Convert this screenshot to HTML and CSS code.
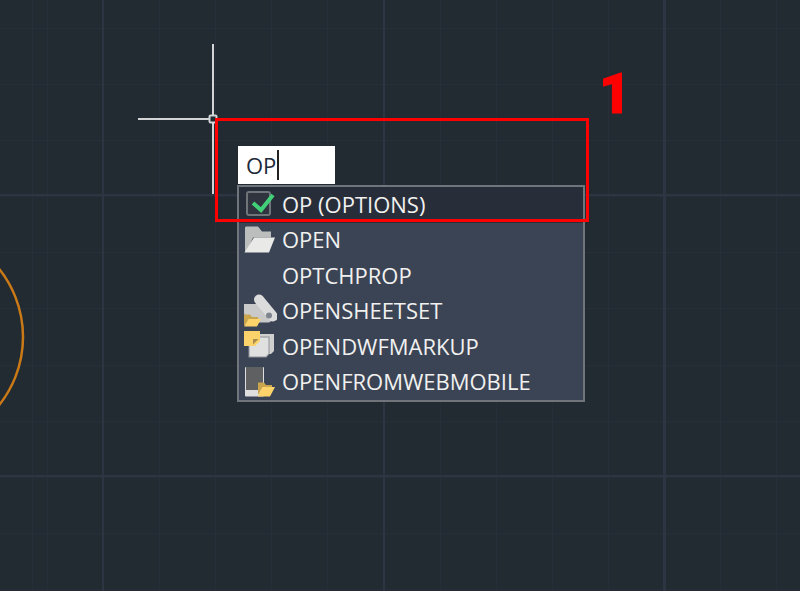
FILE: index.html
```html
<!DOCTYPE html>
<html lang="en">
<head>
    <meta charset="UTF-8">
    <meta name="viewport" content="width=device-width, initial-scale=1.0">
    <title>Command line</title>
    <link rel="stylesheet" href="styles.css">
</head>
<body>
    <div class="drawing">
        <svg class="cad-lines" width="800" height="591" viewBox="0 0 800 591">
            <circle class="arc" cx="-86" cy="337" r="109"/>
            <path class="cursor" d="M213 44V115M213 123V194M138 119H209"/>
            <rect class="cursor" x="209.500" y="115.500" width="7" height="7" rx="1"/>
        </svg>

        <div class="command">
            <div class="command-input">OP<span class="caret"></span></div>
            <ul class="suggestions">
                <li class="suggestion active">
                    <svg class="icon" viewBox="0 0 34 35">
                        <rect x="4" y="5" width="23" height="23" rx="2" fill="#2f343f" stroke="#6f747b" stroke-width="2"/>
                        <path d="M10 16L18 23L30 8" fill="none" stroke="#41cf78" stroke-width="4"/>
                    </svg>
                    <span class="label">OP (OPTIONS)</span>
                </li>
                <li class="suggestion">
                    <svg class="icon" viewBox="0 0 34 35">
                        <path d="M2 29V4.500L3 3.500H15L19 8.500H28V14.500H10L4 29Z" fill="#bcbdbd"/>
                        <path d="M1.500 29.500L11 14.500H32L26 29.500Z" fill="#e9e9e7"/>
                    </svg>
                    <span class="label">OPEN</span>
                </li>
                <li class="suggestion">
                    <span class="icon"></span>
                    <span class="label">OPTCHPROP</span>
                </li>
                <li class="suggestion">
                    <svg class="icon" viewBox="0 0 34 35">
                        <path d="M1 10H14L30 26L26 28.500H8L1 20Z" fill="#c9c9c9"/>
                        <path d="M16 5.500L30 22.500" fill="none" stroke="#dcdcdc" stroke-width="10" stroke-linecap="round"/>
                        <circle cx="26" cy="21.500" r="3" fill="#7f858f"/>
                        <path d="M1 31V20.500H7L9 23H15V25H6L2 31Z" fill="#c9a64e"/>
                        <path d="M1 32.500L5.500 25H18L14 32.500Z" fill="#fbd36a"/>
                    </svg>
                    <span class="label">OPENSHEETSET</span>
                </li>
                <li class="suggestion">
                    <svg class="icon" viewBox="0 0 34 35">
                        <path d="M14 5H31V22L28 25H14Z" fill="#cfcfcf"/>
                        <path d="M5.500 7.500H26.500V25L23.500 28.500H5.500Z" fill="#8f929a"/>
                        <path d="M6.500 8.500H25.500V24.500L23 27.500H6.500Z" fill="#e0e0e0"/>
                        <path d="M1 2H17V12L12 17H1Z" fill="#fbd36a"/>
                        <path d="M10 15.500V10H15.500Z" fill="#a98f4b"/>
                    </svg>
                    <span class="label">OPENDWFMARKUP</span>
                </li>
                <li class="suggestion">
                    <svg class="icon" viewBox="0 0 34 35">
                        <rect x="2" y="2" width="19" height="29.500" rx="1" fill="#dedede"/>
                        <rect x="3" y="2" width="17" height="23" fill="#5f6062"/>
                        <path d="M15 29V17.500H21L23 20H29V22H19L16 29Z" fill="#c9a64e"/>
                        <path d="M15 31.500L19 22H32L27 31.500Z" fill="#fbd36a"/>
                    </svg>
                    <span class="label">OPENFROMWEBMOBILE</span>
                </li>
            </ul>
        </div>

        <div class="highlight"></div>
        <div class="step-number">1</div>
    </div>
</body>
</html>
```

FILE: styles.css
```css
body {
    margin: 0;
    background-color: #222a32;
}
.drawing {
    position: relative;
    width: 800px;
    height: 591px;
    overflow: hidden;
    font-family: "Open Sans", "Noto Sans", sans-serif;
    background-color: #222a32;
    background-image:
        repeating-linear-gradient(90deg, transparent 0, transparent 102.500px, #2d3442 102.500px, #2d3442 104.500px, transparent 104.500px, transparent 280.500px),
        repeating-linear-gradient(180deg, transparent 0, transparent 194.500px, #2d3442 194.500px, #2d3442 196.500px, transparent 196.500px, transparent 280.500px),
        repeating-linear-gradient(90deg, #272e39 0, #272e39 1px, transparent 1px, transparent 56.100px),
        repeating-linear-gradient(180deg, #272e39 0, #272e39 1px, transparent 1px, transparent 56.100px);
    background-position: 0 0, 0 0, 47px 0, 0 28px;
}
.cad-lines {
    position: absolute;
    left: 0;
    top: 0;
}
.arc {
    fill: none;
    stroke: #c97a17;
    stroke-width: 2.500;
}
.cursor {
    fill: none;
    stroke: #d2d4d6;
    stroke-width: 2;
}
.command {
    position: absolute;
    left: 237px;
    top: 146px;
    width: 348px;
}
.command-input {
    display: flex;
    align-items: center;
    box-sizing: border-box;
    width: 97px;
    height: 38px;
    margin-left: 1px;
    padding-left: 8px;
    background-color: #fff;
    color: #1d2a3a;
    font-size: 22px;
}
.caret {
    width: 2px;
    height: 30px;
    margin-left: 1px;
    background-color: #222;
}
.suggestions {
    list-style: none;
    margin: 1px 0 0;
    padding: 0;
    border: 2px solid #70757c;
    background-color: #3b4454;
    color: #f1f1f0;
    font-size: 22px;
}
.suggestion {
    display: flex;
    align-items: center;
    gap: 5px;
    height: 35.500px;
    padding-left: 4px;
    white-space: nowrap;
}
.suggestion.active {
    background-color: #282d3a;
}
.label {
    margin-bottom: 2px;
}
.icon {
    flex: none;
    width: 34px;
    height: 35px;
}
.highlight {
    position: absolute;
    left: 215px;
    top: 118px;
    width: 368px;
    height: 98px;
    border: 3px solid #f00;
}
.step-number {
    position: absolute;
    left: 599px;
    top: 56px;
    color: #f00;
    font-family: Roboto, "Liberation Sans", sans-serif;
    font-size: 55px;
    font-weight: 900;
    line-height: 76px;
    -webkit-text-stroke: 1px #f00;
}
```
